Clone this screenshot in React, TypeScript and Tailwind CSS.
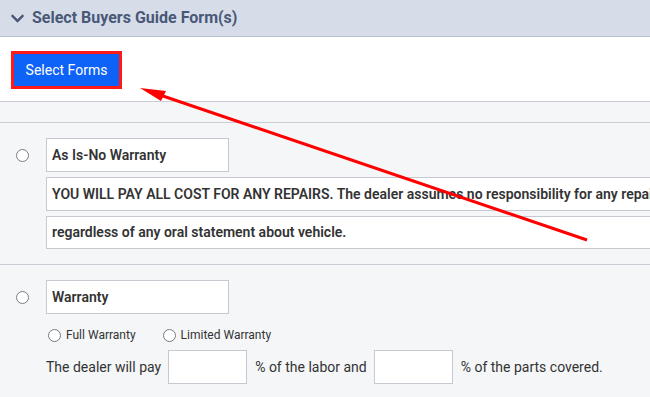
import React from "react";
import { FaChevronDown } from "react-icons/fa";

function Radio({ size = 13 }: { size?: number }) {
  return (
    <span
      className="block rounded-full border-[1.5px] border-[#7a7d85] bg-white shrink-0"
      style={{ width: size, height: size }}
    />
  );
}

export default function App() {
  return (
    <div
      className="relative w-[650px] h-[397px] overflow-hidden bg-[#f5f6f8] text-[#333]"
      style={{ fontFamily: "Roboto, 'Liberation Sans', sans-serif" }}
    >
      {/* Header */}
      <div className="h-[37px] bg-[#d6dde8] border-b border-[#b9c2ce] flex items-center pl-[10px] gap-[7px]">
        <FaChevronDown className="text-[#4a5878] w-[15px] h-[15px]" />
        <span className="text-[16px] font-bold text-[#4a5878]">
          Select Buyers Guide Form(s)
        </span>
      </div>

      {/* Button area */}
      <div className="h-[65px] bg-white border-b border-[#c9cdd3] pl-[11px] pt-[14px]">
        <div className="inline-block border-[2px] border-[#ff1a1a] p-[1px] bg-[#ff1a1a]">
          <div className="w-[105px] h-[32px] bg-[#0d63f8] text-white text-[14px] flex items-center justify-center">
            Select Forms
          </div>
        </div>
      </div>

      {/* gray band */}
      <div className="h-[21px] border-b border-[#c9ced6]" />

      {/* Section 1 */}
      <div className="border-b border-[#c9ced6] pt-[15px] pb-[15px] pl-[16px] flex">
        <div className="w-[30px] shrink-0 h-[34px] flex items-center">
          <Radio size={13} />
        </div>
        <div className="flex flex-col gap-[5px] shrink-0">
          <div className="w-[183px] h-[34px] bg-white border border-[#c6cad0] flex items-center pl-[5px] text-[14px] font-semibold whitespace-nowrap">
            As Is-No Warranty
          </div>
          <div className="w-[700px] h-[34px] bg-white border border-[#c6cad0] flex items-center pl-[5px] text-[14px] font-semibold whitespace-nowrap overflow-hidden">
            YOU WILL PAY ALL COST FOR ANY REPAIRS. The dealer assumes no responsibility for any repairs
          </div>
          <div className="w-[700px] h-[33px] bg-white border border-[#c6cad0] flex items-center pl-[5px] text-[14px] font-semibold whitespace-nowrap">
            regardless of any oral statement about vehicle.
          </div>
        </div>
      </div>

      {/* Section 2 */}
      <div className="pt-[15px] pl-[16px] flex">
        <div className="w-[30px] shrink-0 h-[34px] flex items-center">
          <Radio size={13} />
        </div>
        <div className="flex flex-col shrink-0">
          <div className="w-[183px] h-[34px] bg-white border border-[#c6cad0] flex items-center pl-[5px] text-[14px] font-semibold">
            Warranty
          </div>
          <div className="flex items-center h-[16px] mt-[13px] pl-[2px] text-[12px] text-[#333]">
            <Radio size={13} />
            <span className="ml-[5px]">Full Warranty</span>
            <span className="ml-[27px]"><Radio size={13} /></span>
            <span className="ml-[5px]">Limited Warranty</span>
          </div>
          <div className="flex items-center mt-[7px] text-[14px]">
            <span>The dealer will pay</span>
            <div className="w-[79px] h-[34px] bg-white border border-[#c6cad0] ml-[7px] mr-[8px]" />
            <span>% of the labor and</span>
            <div className="w-[79px] h-[34px] bg-white border border-[#c6cad0] ml-[7px] mr-[8px]" />
            <span>% of the parts covered.</span>
          </div>
        </div>
      </div>

      {/* Arrow overlay */}
      <svg
        className="absolute left-0 top-0 pointer-events-none"
        width="650"
        height="397"
        viewBox="0 0 650 397"
      >
        <line x1="587" y1="240" x2="160" y2="95" stroke="#ff0000" strokeWidth="3" />
        <polygon points="140,88 166,91 161,101" fill="#ff0000" />
      </svg>
    </div>
  );
}
